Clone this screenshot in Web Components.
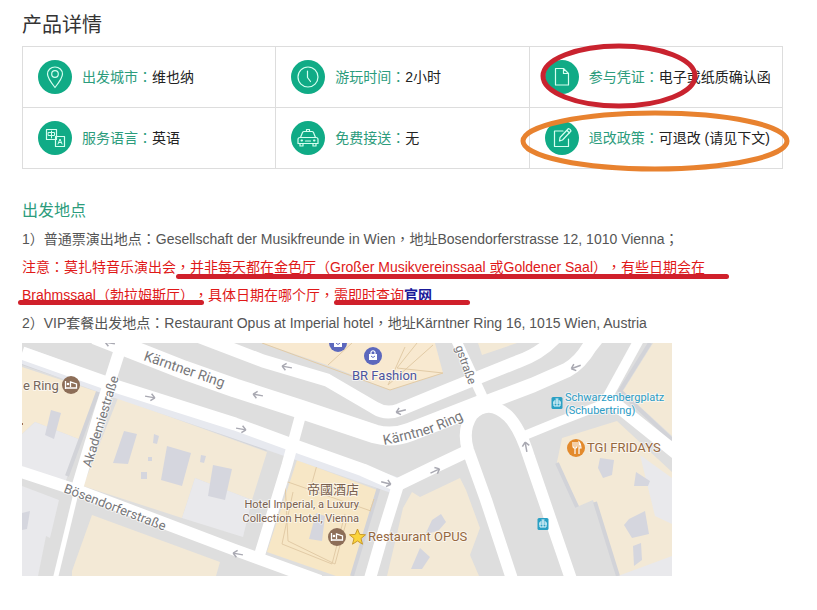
<!DOCTYPE html>
<html lang="zh-CN">
<head>
<meta charset="utf-8">
<meta name="viewport" content="width=device-width, initial-scale=1">
<title>产品详情</title>
<style>
body { margin: 0; background: #fff; font: 14px/28px "Liberation Sans", "Noto Sans CJK SC", sans-serif; color: #555; text-spacing-trim: space-all; }
</style>
</head>
<body>
<product-page></product-page>

<template id="product-page">
<style>
:host { display: block; padding: 9px 34px 32px 22px; }
h1 { margin: 0; font-size: 20px; line-height: 32px; font-weight: 400; color: #333; }
.facts { display: grid; grid-template-columns: repeat(3, 1fr); margin-top: 5px; border: solid #ddd; border-width: 1px 0 0 1px; }
h2 { margin: 28px 0 0; font-size: 16px; line-height: 28px; font-weight: 400; color: #2c9c7c; }
p { margin: 0; }
.warn { color: #e01818; }
.c { font-family: "Liberation Sans", "Noto Sans CJK TC", sans-serif; }
a { color: #1a1a9a; font-weight: 700; text-decoration: none; }
street-map { margin-top: 6px; }
</style>
<h1>产品详情</h1>
<div class="facts">
  <fact-cell icon="pin" label="出发城市">维也纳</fact-cell>
  <fact-cell icon="clock" label="游玩时间">2小时</fact-cell>
  <fact-cell icon="file" label="参与凭证" ring="red">电子或纸质确认函</fact-cell>
  <fact-cell icon="lang" label="服务语言">英语</fact-cell>
  <fact-cell icon="taxi" label="免费接送">无</fact-cell>
  <fact-cell icon="edit" label="退改政策" ring="orange">可退改 (请见下文)</fact-cell>
</div>
<h2>出发地点</h2>
<p>1）普通票演出地点<span class="c" lang="zh-TW">：</span>Gesellschaft der Musikfreunde in Wien<span class="c" lang="zh-TW">，</span>地址Bosendorferstrasse 12, 1010 Vienna<span class="c" lang="zh-TW">；</span></p>
<p class="warn">注意<span class="c" lang="zh-TW">：</span>莫扎特音乐演出会<marker-line style="--end:-24px"><span class="c" lang="zh-TW">，</span>并非每天都在金色厅（Großer Musikvereinssaal 或Goldener Saal）<span class="c" lang="zh-TW">，</span>有些日期会在</marker-line><br><marker-line style="--start:-4px;--end:-10px;--drop:-2px">Brahmssaal（勃拉姆斯厅）</marker-line><span class="c" lang="zh-TW">，</span>具体日期在哪个厅<span class="c" lang="zh-TW">，</span><marker-line style="--end:-38px;--drop:-2px">需即时查询<a href="#">官网</a></marker-line></p>
<p>2）VIP套餐出发地点<span class="c" lang="zh-TW">：</span>Restaurant Opus at Imperial hotel<span class="c" lang="zh-TW">，</span>地址Kärntner Ring 16, 1015 Wien, Austria</p>
<street-map></street-map>
</template>

<template id="fact-cell">
<style>
:host { display: flex; align-items: center; gap: 10px; height: 60px; padding-left: 15px; border: solid #ddd; border-width: 0 1px 1px 0; position: relative; line-height: 20px; white-space: nowrap; }
.icon { flex: none; width: 34px; height: 34px; }
.label { color: #2c9c7c; }
.c { font-family: "Liberation Sans", "Noto Sans CJK TC", sans-serif; }
.value { color: #222; }
.ring { position: absolute; overflow: visible; width: 1px; height: 1px; left: 0; top: 0; pointer-events: none; z-index: 1; }
</style>
<svg class="icon" viewBox="0 0 34 34" aria-hidden="true"><circle cx="17" cy="17" r="17" fill="#10ab86"/><g class="glyph" fill="none" stroke="#d5fff0" stroke-width="1.2" stroke-linejoin="round" stroke-linecap="round"></g></svg>
<div><span class="label"></span><span class="value"><slot></slot></span></div>
</template>

<template id="marker-line"><style>
:host { position: relative; display: inline; }
:host::after { content: ""; position: absolute; left: var(--start, 0px); right: var(--end, 0px); bottom: var(--drop, -4px); height: 5px; border-radius: 3px; background: #d0202b; }
</style><slot></slot></template>

<template id="street-map">
<style>
:host { display: block; max-width: 650px; }
svg { display: block; width: 100%; height: auto; font-family: Roboto, "Noto Sans CJK TC", sans-serif; }
.halo text { paint-order: stroke; stroke: #fff; stroke-opacity: .6; stroke-width: 2px; stroke-linejoin: round; }
</style>
<svg viewBox="22 343 650 233" role="img" aria-label="地图">
<defs>
<path id="ring-curve" d="M384 445 Q405 441 425 435 T468 417"/>
<path id="arrow" d="M-5 0H5M-5 0l4-3.500M-5 0l4 3.500" fill="none" stroke="#a9a9b2" stroke-width="1.500"/>
<g id="bed"><circle r="9" fill="#8d6e58"/><path d="M-5.500-4v8M-5.500 3h11V-1l-6-2v5" fill="none" stroke="#fff" stroke-width="1.300"/><circle cx="-3" cy="-1" r="1.300" fill="#fff"/></g>
<g id="bag"><circle r="9" fill="#5c68bd"/><path d="M-4-2h8v6h-8z" fill="#fff"/><path d="M-2-2v-2q2-2.500 4 0v2" fill="none" stroke="#fff" stroke-width="1.200"/><path d="M-2 0q2 3 4 0" fill="none" stroke="#5c68bd"/></g>
<g id="tram"><rect x="-5.500" y="-6" width="11" height="12" rx="1.500" fill="#2aa0c4"/><path d="M-3-2h6v5h-6zM-1.500-4h3M0-4v7M-4 0h8" fill="none" stroke="#e6f8fd" stroke-width="1"/></g>
</defs>
<path fill="#dedede" d="M22 343h650v233H22z"/>
<g fill="#f3e9d6">
<path fill="#f6ead3" d="M22 367L98 392 81 440 35 422 22 434z"/>
<path d="M118 398L267 452 252 500 195 478 182 518 83 486z"/>
<path d="M92 515L220 562 216 576H72V571z"/>
<path fill="#f7e7c6" d="M297 460L377 490 353 576H336L267 552z"/>
<path d="M412 492L420 497 460 478 466 490 480 528 470 555 479 576H387L403 508z"/>
<path d="M562 438L617 421 672 472V565L645 576H617L593 500 579 506 557 462z"/>
<path d="M653 343L623 391 672 436V343z"/>
<path fill="#f8e9d0" d="M262 343L330 366 390 390 443 373 435 343z"/>
<path d="M478 343L482 355 517 343z"/>
</g>
<g fill="#e9e9ec">
<path d="M35 422L81 440 65 483 22 466V434z"/>
<path d="M22 486L59 500 50 538 46 536 38 576H22z"/>
<path d="M195 478L252 500 243 537 182 518z"/>
<path d="M640 455L672 478V524L655 516z"/>
<path d="M618 576L672 556V576z"/>
</g>
<g fill="none" stroke="#d2d3d8" stroke-width="4">
<path d="M22 363L99 389 67 476M118 395L267 449M297 456L379 487 352 576M557 463L577 507M595 502L618 576M650 343L620 391 672 440"/>
</g>
<g fill="#d5d6de">
<path d="M51 410L61 413 54 439 45 435z"/><path d="M124 431L137 434 128 464 113 463z"/><path d="M167 446L191 453 182 486 161 480z"/>
<path d="M213 465L232 469 225 500 208 496z"/><path d="M22 513L30 511 27 529 22 530z"/><path d="M316 513L325 516 322 541 309 539z"/>
<path d="M420 548L430 557 422 569 411 569z"/><path d="M432 520L441 514 446 522 439 530 425 535z"/><path d="M600 458L614 460 612 475 603 478 598 468z"/>
<path d="M636 472L650 481 648 486 634 486z"/><path d="M629 519L645 511 649 534 632 538 624 525z"/><path d="M633 546L641 543 642 560 634 566z"/>
<path d="M154 434l5 2-2 8-4-1zM141 472h6v7h-6zM201 455l5 1-2 7-4-1zM148 457h4v4h-4z"/>
</g>
<g fill="none" stroke="#e2cba6" stroke-width="1"><path d="M285 481L371 511M285 481l3 60 47 23 12-45M317 465l-7 25M293 492l-11 52 50 20 13-50M370 511l4-12M262 343L390 390 443 373M352 343l-24 22M405 347l-17 38M388 385l45-40M417 343l-20 25 46 5"/></g>
<g fill="none" stroke="#e7e9ef" stroke-linejoin="round">
<path stroke-width="17" d="M22 355L115 389 235 430 287 448 397 486"/>
</g>
<g fill="none" stroke="#fff" stroke-linejoin="round">
<path stroke-width="13" d="M22 353L115 386 235 424 287 443 363 470 397 485 432 468 472 449"/>
<path stroke-width="19" d="M95 335L184 370 235 388 300 409 375 434Q392 439 410 432L487 402"/>
<path stroke-width="15" d="M475 407L533 385 567 370Q580 363 590 346L598 336"/>
<path stroke-width="13" d="M200 337L263 361 327 380 375 408Q386 415 399 410L450 389 517 362Q540 354 555 338"/>
<path stroke-width="12" d="M124 337L99 415 78 485"/>
<path stroke-width="5" d="M78 485L55 580"/>
<path stroke-width="11" d="M302 410L287 465 258 560"/>
<path stroke-width="12" d="M15 470L82 492 235 550 320 581"/>
<path stroke-width="12" d="M398 485L384 530 369 582"/>
<path stroke-width="12" d="M513 582L486 500 468 450Q462 430 472 415 488 398 508 416 520 428 529 457L572 582"/>
<path stroke-width="10" d="M456 340L485 402"/>
<path stroke-width="10" d="M641 336L607 398"/>
<path stroke-width="9" d="M521 437L560 421 609 402"/>
<path stroke-width="13" d="M604 395L680 456"/>
</g>
<use href="#arrow" transform="translate(287 367) rotate(10)"/><use href="#arrow" transform="translate(258 395) rotate(10)"/>
<use href="#arrow" transform="translate(401 411) rotate(-15)"/><use href="#arrow" transform="translate(576 367) rotate(-20)"/>
<use href="#arrow" transform="translate(150 397) rotate(190)"/><use href="#arrow" transform="translate(241 429) rotate(190)"/>
<use href="#arrow" transform="translate(386 483) rotate(195)"/><use href="#arrow" transform="translate(435 471) rotate(155)"/>
<use href="#arrow" transform="translate(526 447) rotate(80)"/><use href="#arrow" transform="translate(238 554) rotate(10)"/>
<use href="#arrow" transform="translate(110 343) rotate(10)"/>
<g class="halo" font-size="13" fill="#77777a">
<text transform="translate(143 360) rotate(19)" font-size="14">Kärntner Ring</text>
<text transform="translate(91 468) rotate(-73)">Akademiestraße</text>
<text transform="translate(63 492) rotate(21)">Bösendorferstraße</text>
<text font-size="14"><textPath href="#ring-curve">Kärntner Ring</textPath></text>
<text transform="translate(455 347) rotate(70)" font-size="12">gstraße</text>
<text x="23" y="390" fill="#76675d">e Ring</text>
<text x="352" y="380" fill="#4c559f">BR Fashion</text>
<text x="587" y="452" fill="#96683f">TGI FRIDAYS</text>
<text x="368" y="541" font-size="13" fill="#96683f">Restaurant OPUS</text>
<g font-size="11" fill="#2c9cc5"><text x="565" y="401">Schwarzenbergplatz</text><text x="565" y="414">(Schubertring)</text></g>
<g text-anchor="end" fill="#79604f"><text x="359" y="494">帝國酒店</text><g font-size="11"><text x="359" y="508">Hotel Imperial, a Luxury</text><text x="359" y="522">Collection Hotel, Vienna</text></g></g>
</g>
<use href="#bed" x="71" y="385"/><use href="#bed" x="337" y="537"/>
<use href="#bag" x="338" y="343"/><use href="#bag" x="373" y="356"/>
<use href="#tram" x="557" y="403"/><use href="#tram" x="543" y="524"/>
<circle cx="576" cy="448" r="9" fill="#e38a2c"/><path d="M573 442v4q0 2 2 2v6M577 442v4q0 2-2 2M575 442v5M579 454v-12q2 2 2 6h-2" fill="none" stroke="#fff" stroke-width="1.200"/>
<path d="M357.500 529l2.200 5.400 5.800.4-4.500 3.700 1.500 5.700-5-3.200-5 3.200 1.500-5.700-4.500-3.700 5.800-.4z" fill="#fbd43c" stroke="#c99a2c" stroke-width="1"/>
<path d="M22 424h1" stroke="#9a6b50" stroke-width="2"/>
</svg>
</template>

<script>
const glyphs = {
  pin: '<path d="M17 27.500Q9.500 18 9.500 14a7.500 7 0 0 1 15 0Q24.500 18 17 27.500z"/><circle cx="17" cy="14" r="3.300"/>',
  clock: '<circle cx="17" cy="17" r="10"/><path d="M16.500 11v6.500l3 4"/>',
  file: '<path d="M10.500 8.500h8l5 5v11.500h-13zM18.500 8.500v5h5"/>',
  lang: '<path d="M8.500 8.500h10v10h-10zM17.500 15.500h9v10h-9z"/><path d="M10.500 11.500h6v3h-6zM13.500 10v7M20 23l2-5 2 5M21 21.500h2" stroke-width="1"/>',
  taxi: '<path d="M9.500 16.500l2-5q.5-1 1.500-1h8q1 0 1.500 1l2 5M9 16.500h16q2 0 2 2v4H7v-4q0-2 2-2zM9 22.500v2.500h3v-2.500M22 22.500v2.500h3v-2.500M14.500 20h5M15.500 10V8.500h3V10"/><path d="M10.500 19.500h.5M23 19.500h.5" stroke-width="2"/>',
  edit: '<path d="M18 10h-8.500v15.500h14V18"/><path d="M15 16.500l8.500-9q2 .5 2.500 2.500l-8.500 9-3 1zM22 9.500l2.500 2.500"/>'
};
const rings = {
  red: '<ellipse cx="89" cy="29" rx="76" ry="30" fill="none" stroke="#c9232f" stroke-width="5"/>',
  orange: '<ellipse cx="125" cy="33" rx="132" ry="28" fill="none" stroke="#e8822f" stroke-width="5"/>'
};
class TemplateElement extends HTMLElement {
  constructor() {
    super();
    this.attachShadow({ mode: 'open' }).append(document.getElementById(this.localName).content.cloneNode(true));
  }
}
customElements.define('street-map', class extends TemplateElement {});
customElements.define('marker-line', class extends TemplateElement {});
customElements.define('fact-cell', class extends TemplateElement {
  connectedCallback() {
    const root = this.shadowRoot;
    root.querySelector('.glyph').innerHTML = glyphs[this.getAttribute('icon')];
    root.querySelector('.label').innerHTML = this.getAttribute('label') + '<span class="c" lang="zh-TW">：</span>';
    const ring = rings[this.getAttribute('ring')];
    if (ring && !root.querySelector('.ring')) {
      root.lastElementChild.insertAdjacentHTML('afterend', '<svg class="ring" aria-hidden="true">' + ring + '</svg>');
    }
  }
});
customElements.define('product-page', class extends TemplateElement {});
</script>
</body>
</html>
